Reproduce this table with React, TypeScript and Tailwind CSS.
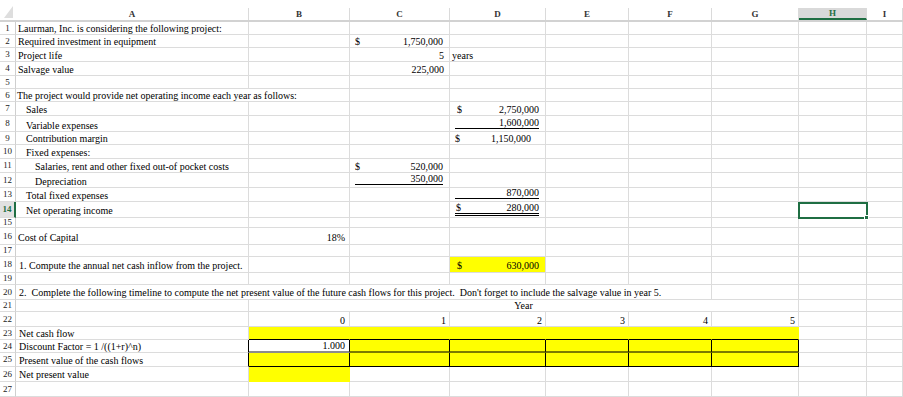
import React from "react";

const COLS = "grid grid-rows-1 grid-cols-[16px_233px_101px_100px_96px_83px_83px_87px_68px_36px]";
const GRID = "border-r border-b border-[#dcdcdc]";
const YEL = "bg-[#ffff00] border-r border-b border-[#ffff00]";

type CellProps = { children?: React.ReactNode; className?: string; b?: string };

function C({ children, className = "", b = GRID }: CellProps) {
  return (
    <div className={`flex min-h-0 min-w-0 items-end whitespace-nowrap leading-[11px] ${b} ${className}`}>
      {children}
    </div>
  );
}

const blank = (k: number, b?: string) => Array.from({ length: k }, (_, i) => <C key={`b${i}`} b={b} />);

function Acct({ n, className = "" }: { n: string; className?: string }) {
  return (
    <C className={`justify-between pl-[5px] pr-[6px] ${className}`}>
      <span>$</span>
      <span>{n}</span>
    </C>
  );
}

function Num({ n, className = "pr-[5px]" }: { n: string; className?: string }) {
  return <C className={`justify-end ${className}`}>{n}</C>;
}

function Under({ n, className = "" }: { n: string; className?: string }) {
  return (
    <C className={`pb-[2px] pl-[5px] pr-[6px] ${className}`}>
      <span className="flex-1 border-b border-black text-right leading-[10px]">{n}</span>
    </C>
  );
}

function Row({ n, h, active, children }: { n: number; h: string; active?: boolean; children: React.ReactNode }) {
  return (
    <div className={`${COLS} ${h}`}>
      <div
        className={`flex min-h-0 items-center justify-center border-b border-[#dcdcdc] text-[9px] leading-none ${
          active ? "border-r-2 border-r-[#1f6e43] bg-[#e1e1e1] font-bold text-[#1f6e43]" : "border-r border-r-[#cfcfcf] text-[#222]"
        }`}
      >
        {n}
      </div>
      {children}
    </div>
  );
}

const letters = ["A", "B", "C", "D", "E", "F", "G", "H", "I"];

export default function App() {
  return (
    <div className="h-[397px] w-[903px] overflow-hidden bg-white font-['Liberation_Serif','Times_New_Roman',serif] text-[10px] text-black">
      {/* column headers */}
      <div className={`${COLS} h-[22px] border-b-2 border-[#d2d2d2]`}>
        <div className="flex items-end justify-end pb-[2px] pr-[3px]">
          <svg width="9" height="12" viewBox="0 0 9 12">
            <polygon points="9,0 9,12 0,12" fill="#dedede" />
          </svg>
        </div>
        {letters.map((l) => (
          <div key={l} className="flex min-h-0 flex-col">
            <div className="h-[8px]" />
            <div
              className={`flex flex-1 items-center justify-center border-r border-[#dadada] text-[9px] font-bold leading-none ${
                l === "H" ? "border-b-2 border-b-[#1f6e43] bg-[#d9d9d9] text-[#1f6e43]" : "text-[#333]"
              }`}
            >
              {l}
            </div>
          </div>
        ))}
      </div>

      <Row n={1} h="h-[13px]">
        <C className="pl-[2px]">Laurman, Inc. is considering the following project:</C>
        {blank(8)}
      </Row>
      <Row n={2} h="h-[13px]">
        <C className="pl-[2px]">Required investment in equipment</C>
        <C />
        <Acct n="1,750,000" />
        {blank(6)}
      </Row>
      <Row n={3} h="h-[14px]">
        <C className="pl-[2px]">Project life</C>
        <C />
        <Num n="5" />
        <C className="pl-[2px]">years</C>
        {blank(5)}
      </Row>
      <Row n={4} h="h-[14px]">
        <C className="pl-[2px]">Salvage value</C>
        <C />
        <Num n="225,000" />
        {blank(6)}
      </Row>
      <Row n={5} h="h-[13px]">{blank(9)}</Row>
      <Row n={6} h="h-[13px]">
        <C className="col-span-2 pl-[1px]">The project would provide net operating income each year as follows:</C>
        {blank(7)}
      </Row>
      <Row n={7} h="h-[14px]">
        <C className="pl-[10px]">Sales</C>
        {blank(2)}
        <Acct n="2,750,000" className="pl-[7px]" />
        {blank(5)}
      </Row>
      <Row n={8} h="h-[16px]">
        <C className="pl-[10px]">Variable expenses</C>
        {blank(2)}
        <Under n="1,600,000" />
        {blank(5)}
      </Row>
      <Row n={9} h="h-[13px]">
        <C className="pl-[10px]">Contribution margin</C>
        {blank(2)}
        <Acct n="1,150,000" className="pl-[3px] pr-[14px]" />
        {blank(5)}
      </Row>
      <Row n={10} h="h-[14px]">
        <C className="pl-[10px]">Fixed expenses:</C>
        {blank(8)}
      </Row>
      <Row n={11} h="h-[14px]">
        <C className="pl-[19px]">Salaries, rent and other fixed out-of pocket costs</C>
        <C />
        <Acct n="520,000" />
        {blank(6)}
      </Row>
      <Row n={12} h="h-[15px]">
        <C className="pl-[19px]">Depreciation</C>
        <C />
        <Under n="350,000" className="pl-[4px]" />
        {blank(6)}
      </Row>
      <Row n={13} h="h-[14px]">
        <C className="pl-[10px]">Total fixed expenses</C>
        {blank(2)}
        <Under n="870,000" />
        {blank(5)}
      </Row>
      <Row n={14} h="h-[16px]" active>
        <C className="pb-[1px] pl-[10px]">Net operating income</C>
        {blank(2)}
        <C className="pb-[1px] pl-[5px] pr-[6px]">
          <span className="flex flex-1 justify-between border-b-[3px] border-double border-black pl-[1px] leading-[10px]">
            <span>$</span>
            <span>280,000</span>
          </span>
        </C>
        {blank(3)}
        <div className={`relative ${GRID}`}>
          <div className="absolute top-0 -left-[1px] h-[17px] w-[70px] border-2 border-[#1f6e43]">
            <div className="absolute -right-[3px] -bottom-[3px] h-[5px] w-[5px] border border-white bg-[#1f6e43]" />
          </div>
        </div>
        <C />
      </Row>
      <Row n={15} h="h-[10px]">{blank(9)}</Row>
      <Row n={16} h="h-[17px]">
        <C className="pb-[1px] pl-[2px]">Cost of Capital</C>
        <Num n="18%" className="pb-[1px] pr-[4px]" />
        {blank(7)}
      </Row>
      <Row n={17} h="h-[12px]">{blank(9)}</Row>
      <Row n={18} h="h-[16px]">
        <C className="pb-[1px] pl-[3px]">1. Compute the annual net cash inflow from the project.</C>
        {blank(2)}
        <Acct n="630,000" className="bg-[#ffff00] pb-[1px] pl-[7px]" />
        {blank(5)}
      </Row>
      <Row n={19} h="h-[12px]">{blank(9)}</Row>
      <Row n={20} h="h-[15px]">
        <C className="col-span-6 pb-[1px] pl-[3px]">
          2.&nbsp; Complete the following timeline to compute the net present value of the future cash flows for this project.&nbsp; Don't forget to include the salvage value in year 5.
        </C>
        {blank(3)}
      </Row>
      <Row n={21} h="h-[12px]">
        <C />
        <C className="col-span-6 justify-center">Year</C>
        {blank(2)}
      </Row>
      <Row n={22} h="h-[15px]">
        <C />
        <Num n="0" className="pr-[4px]" />
        <Num n="1" className="pr-[3px]" />
        <Num n="2" className="pr-[3px]" />
        <Num n="3" className="pr-[3px]" />
        <Num n="4" className="pr-[3px]" />
        <Num n="5" className="pr-[3px]" />
        {blank(2)}
      </Row>
      <Row n={23} h="h-[13px]">
        <C className="pl-[3px]">Net cash flow</C>
        {blank(6, "bg-[#ffff00] border-r border-r-[#ffff00] border-b border-b-[#000000]")}
        {blank(2)}
      </Row>
      <Row n={24} h="h-[13px]">
        <C className="pl-[3px]" b="border-b border-b-[#dcdcdc] border-r border-r-[#000000]">
          Discount Factor = 1 /((1+r)^n)
        </C>
        <C className="justify-end pr-[4px]" b="border-r border-r-[#000000] border-b-2 border-b-[#8c8c8c]">
          1.000
        </C>
        {blank(5, "bg-[#ffff00] border-r border-r-[#000000] border-b-2 border-b-[#7a7a00]")}
        {blank(2)}
      </Row>
      <Row n={25} h="h-[14px]">
        <C className="pl-[3px]" b="border-b border-b-[#dcdcdc] border-r border-r-[#000000]">
          Present value of the cash flows
        </C>
        {blank(6, "bg-[#ffff00] border-r border-r-[#000000] border-b border-b-[#000000]")}
        {blank(2)}
      </Row>
      <Row n={26} h="h-[15px]">
        <C className="pb-[1px] pl-[3px]">Net present value</C>
        <C b={YEL} />
        {blank(7)}
      </Row>
      <Row n={27} h="h-[15px]">{blank(9)}</Row>
    </div>
  );
}
